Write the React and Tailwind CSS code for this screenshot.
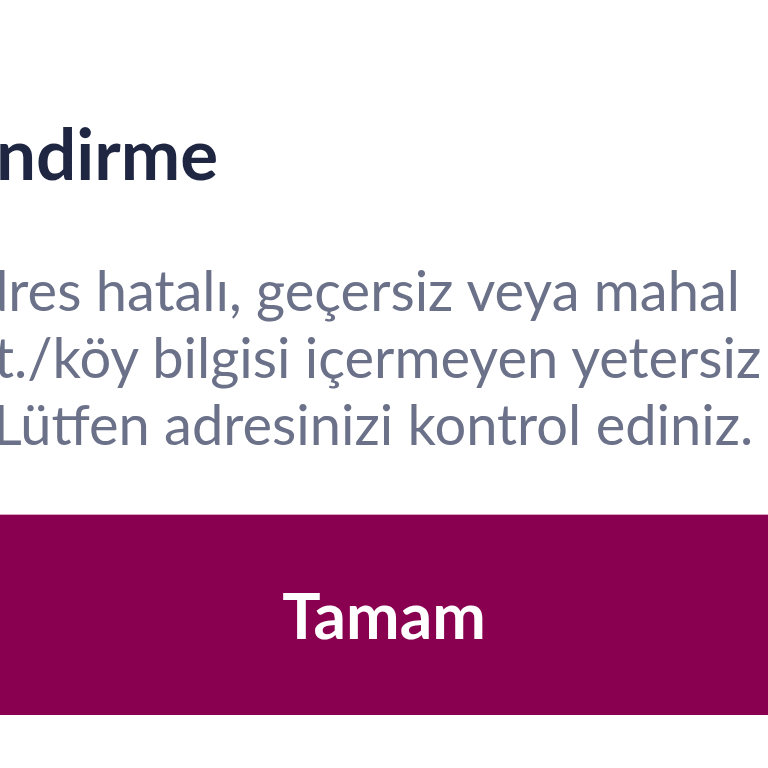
export default function App() {
  return (
    <div
      className="h-[768px] w-[768px] overflow-hidden bg-white"
      style={{ fontFamily: "Lato, 'Noto Sans', sans-serif" }}
    >
      {/* Title */}
      <div className="pt-[113px] pl-0">
        <h1 className="-ml-[4px] whitespace-nowrap text-[71px] font-bold leading-[80px] text-[#1f2642]">
          ndirme
        </h1>
      </div>

      {/* Message */}
      <div className="mt-[63px] text-[56px] leading-[67px] text-[#6b7188]">
        <p className="-ml-[23px] whitespace-nowrap">dres hatalı, geçersiz veya mahal</p>
        <p className="-ml-[6px] whitespace-nowrap">t./köy bilgisi içermeyen yetersiz</p>
        <p className="-ml-[7px] whitespace-nowrap">Lütfen adresinizi kontrol ediniz.</p>
      </div>

      {/* Button */}
      <button className="mt-[58px] flex h-[200px] w-full items-center justify-center bg-[#88004f] text-[64px] font-bold text-white shadow-[0_-1px_0_#d9a6c0]">
        Tamam
      </button>
    </div>
  );
}
